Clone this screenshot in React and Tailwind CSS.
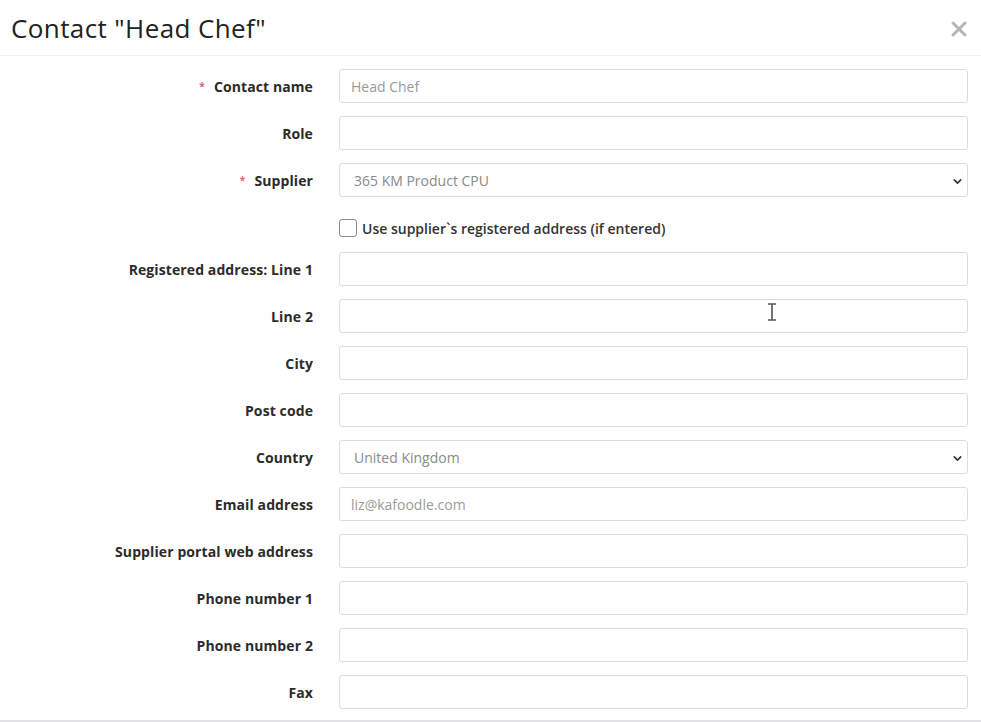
import { LuChevronDown } from "react-icons/lu";

const Field = ({ label, required, value, select, placeholder }) => {
  return (
    <div className="flex items-center h-[34px]">
      <label className="w-[313px] shrink-0 text-right text-[14px] font-bold text-[#2b2b2b] tracking-[0.1px]">
        {required && <span className="text-[#e0607e] text-[10px] mr-[9px] relative -top-[2px]">*</span>}
        {label}
      </label>
      <div className="ml-[26px] w-[629px] h-full relative border border-[#dcdcdc] rounded-[3px] bg-white flex items-center">
        {select ? (
          <>
            <span className="pl-[14px] text-[14px] text-[#8a8a8a]">{value}</span>
            <LuChevronDown className="absolute right-[3px] top-[11px] text-[13px] text-[#333]" strokeWidth={3} />
          </>
        ) : (
          <span className="pl-[11px] text-[14px] text-[#9a9a9a]">{placeholder}</span>
        )}
      </div>
    </div>
  );
};

const App = () => {
  return (
    <div className="w-[981px] h-[722px] bg-white overflow-hidden relative" style={{ fontFamily: "'Open Sans', 'Liberation Sans', sans-serif" }}>
      {/* Header */}
      <div className="h-[56px] border-b border-[#ececec] flex items-center justify-between pl-[11px] pr-[13px]">
        <h2 className="text-[26px] text-[#222] tracking-[0.4px] pt-[2px]">Contact "Head Chef"</h2>
        <svg width="18" height="18" viewBox="0 0 18 18" className="mt-[3px]">
          <path d="M3 3 L15 15 M15 3 L3 15" stroke="#b5b5b5" strokeWidth="3" strokeLinecap="round" />
        </svg>
      </div>

      {/* Body */}
      <div className="pt-[13px] flex flex-col">
        <div className="flex flex-col gap-[13px]">
          <Field label="Contact name" required placeholder="Head Chef" />
          <Field label="Role" />
          <Field label="Supplier" required select value="365 KM Product CPU" />
        </div>

        <div className="h-[30px] mt-[16px] flex items-center pl-[339px]">
          <span className="w-[18px] h-[18px] border-[1.5px] border-[#8c8c8c] rounded-[3px] bg-white" />
          <span className="ml-[5px] text-[14px] font-semibold text-[#333]">Use supplier`s registered address (if entered)</span>
        </div>

        <div className="mt-[9px] flex flex-col gap-[13px]">
          <Field label="Registered address: Line 1" />
          <Field label="Line 2" />
          <Field label="City" />
          <Field label="Post code" />
          <Field label="Country" select value="United Kingdom" />
          <Field label="Email address" placeholder="liz@kafoodle.com" />
          <Field label="Supplier portal web address" />
          <Field label="Phone number 1" />
          <Field label="Phone number 2" />
          <Field label="Fax" />
        </div>
      </div>

      {/* text cursor */}
      <svg width="10" height="18" viewBox="0 0 10 18" className="absolute left-[767px] top-[303px]">
        <path d="M1 1 H9 M5 1 V17 M1 17 H9" stroke="#555" strokeWidth="1.6" />
      </svg>

      <div className="absolute left-0 right-0 bottom-0 h-[2px] bg-[#e2e2e6]" />
    </div>
  );
};

export default App;
